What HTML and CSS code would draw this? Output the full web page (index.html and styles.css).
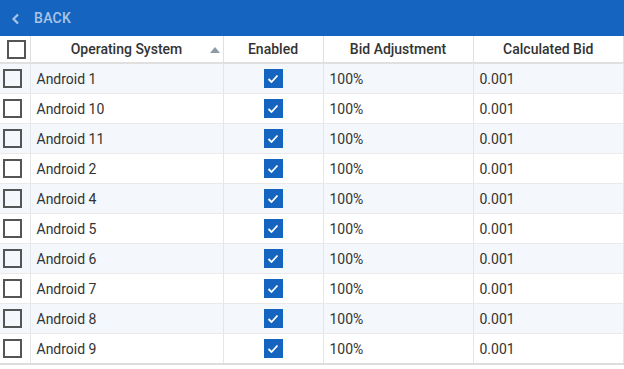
FILE: index.html
```html
<!DOCTYPE html>
<html lang="en">
<head>
    <meta charset="UTF-8">
    <meta name="viewport" content="width=device-width, initial-scale=1.0">
    <title>Operating Systems</title>
    <link rel="stylesheet" href="styles.css">
</head>
<body>

<div class="topbar">
    <a class="back" href="#">
        <svg width="10" height="12" viewBox="0 0 10 12"><path d="M7 1.5 L2.5 6 L7 10.5" fill="none" stroke="currentColor" stroke-width="2.2"/></svg>
        <span>BACK</span>
    </a>
</div>

<table class="grid">
    <colgroup>
        <col style="width:30px">
        <col style="width:193px">
        <col style="width:100px">
        <col style="width:150px">
        <col>
    </colgroup>
    <thead>
        <tr>
            <th class="sel"><span class="box"></span></th>
            <th class="sorted">Operating System <span class="arrow"></span></th>
            <th>Enabled</th>
            <th>Bid Adjustment</th>
            <th>Calculated Bid</th>
        </tr>
    </thead>
    <tbody id="rows"></tbody>
</table>

<script>
var systems = ['Android 1', 'Android 10', 'Android 11', 'Android 2', 'Android 4',
               'Android 5', 'Android 6', 'Android 7', 'Android 8', 'Android 9'];
var check = '<span class="box checked"><svg width="12" height="10" viewBox="0 0 12 10"><path d="M1.5 5 L4.5 8 L10.5 1.5" fill="none" stroke="#fff" stroke-width="1.8"/></svg></span>';
var html = '';
systems.forEach(function (name) {
    html += '<tr>' +
        '<td class="sel"><span class="box"></span></td>' +
        '<td>' + name + '</td>' +
        '<td class="center">' + check + '</td>' +
        '<td>100%</td>' +
        '<td>0.001</td>' +
        '</tr>';
});
document.getElementById('rows').innerHTML = html;
</script>

</body>
</html>
```

FILE: styles.css
```css
body {
    margin: 0;
    font-family: Roboto, "Liberation Sans", sans-serif;
    background-color: #fff;
}
.topbar {
    height: 36px;
    background-color: #1565c0;
    display: flex;
    align-items: center;
    padding-left: 11px;
}
.back {
    display: flex;
    align-items: center;
    gap: 13px;
    color: #aac4e6;
    text-decoration: none;
    font-size: 14px;
    font-weight: 500;
    letter-spacing: 0.3px;
}
.back svg {
    margin-top: 1px;
}
.grid {
    width: 624px;
    border-collapse: collapse;
    table-layout: fixed;
    border-right: 1px solid #ddd;
    border-bottom: 2px solid #ddd;
    font-size: 14px;
    color: #333;
}
.grid th {
    height: 26px;
    font-weight: 500;
    text-align: center;
    border-right: 1px solid #e0e0e0;
    border-bottom: 2px solid #e0e0e0;
    padding: 0 6px;
    position: relative;
}
.grid td {
    height: 29px;
    padding: 0 6px;
    border-right: 1px solid #e6e6e6;
    border-bottom: 1px solid #eaeaea;
    white-space: nowrap;
}
.grid tbody tr:nth-child(odd) {
    background-color: #f4f8fc;
}
.grid .sel {
    padding: 0 0 0 3px;
}
.grid .center {
    text-align: center;
}
.box {
    display: inline-block;
    box-sizing: border-box;
    width: 19px;
    height: 19px;
    border: 2px solid #555;
    vertical-align: middle;
}
.box.checked {
    border: none;
    background-color: #1565c0;
    display: inline-flex;
    align-items: center;
    justify-content: center;
}
.arrow {
    position: absolute;
    right: 3px;
    top: 11px;
    width: 0;
    height: 0;
    border-left: 5px solid transparent;
    border-right: 5px solid transparent;
    border-bottom: 6px solid #8f9aa6;
}
```
